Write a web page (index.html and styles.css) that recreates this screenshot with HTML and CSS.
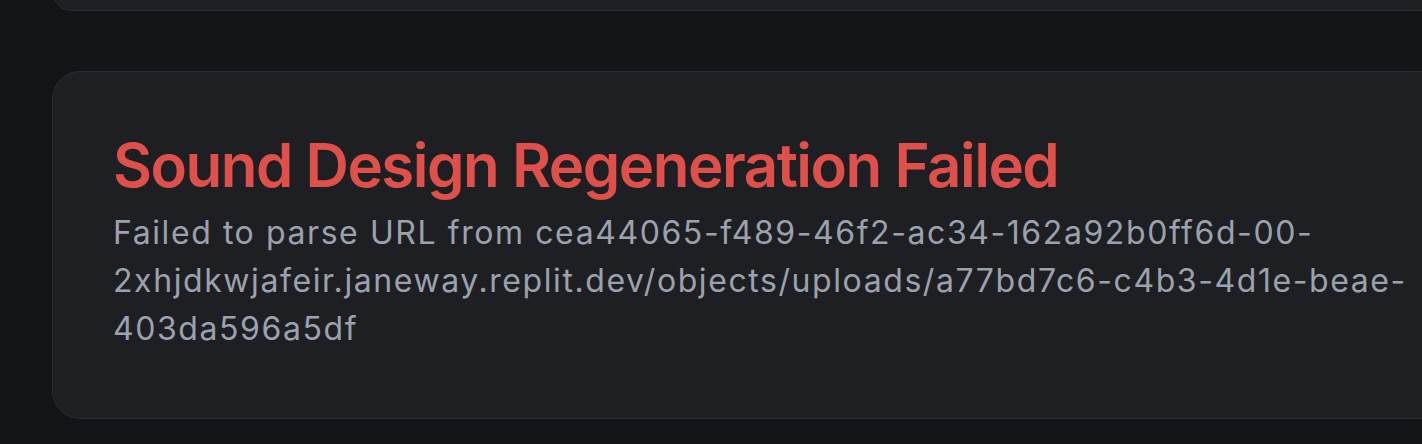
FILE: index.html
```html
<!DOCTYPE html>
<html lang="en">
<head>
<meta charset="utf-8">
<title>Sound Design Regeneration Failed</title>
<link rel="stylesheet" href="styles.css">
</head>
<body>
<main class="page">
  <section class="card card-prev" aria-hidden="true"></section>
  <section class="card card-error">
    <h2 class="error-title">Sound Design Regeneration Failed</h2>
    <p class="error-message">Failed to parse URL from cea44065-f489-46f2-ac34-162a92b0ff6d-00-2xhjdkwjafeir.janeway.replit.dev/objects/uploads/a77bd7c6-c4b3-4d1e-beae-403da596a5df</p>
  </section>
</main>
</body>
</html>
```

FILE: styles.css
```css
html {
  overflow: hidden;
  background: #131418;
}
body {
  margin: 0;
  background: #131418;
  font-family: "Inter", "Noto Sans", sans-serif;
}
.page {
  padding-left: 52px;
  display: flex;
  flex-direction: column;
  gap: 60px;
}
.card {
  width: 1460px;
  flex: none;
  background: #1e1f23;
  border: 1px solid #2b2c31;
  border-radius: 28px;
  box-sizing: border-box;
}
.card-prev {
  height: 40px;
  margin-top: -29px;
}
.card-error {
  height: 348px;
  padding: 60px 60px 0 60px;
}
.error-title {
  margin: 0;
  font-size: 60px;
  line-height: 66px;
  font-weight: 600;
  color: #e0504b;
  letter-spacing: -1.5px;
}
.error-message {
  margin: 11px 0 0 0;
  font-size: 32px;
  line-height: 48px;
  color: #9ca2ad;
  letter-spacing: 1.58px;
}
```
